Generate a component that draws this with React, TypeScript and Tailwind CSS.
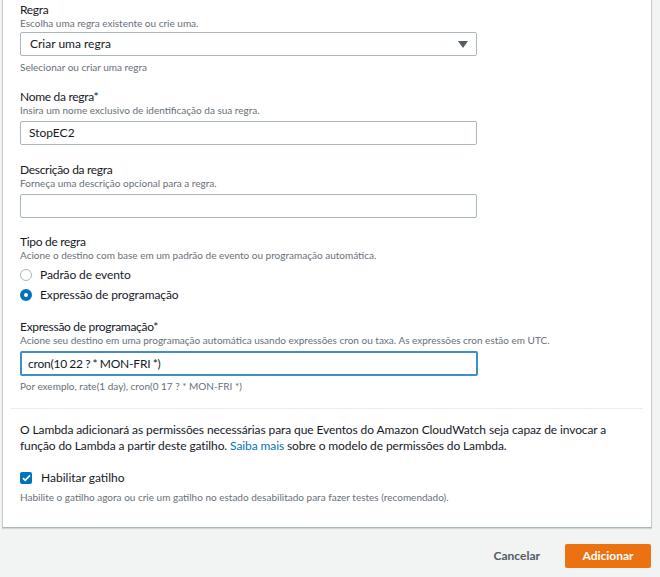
import React from "react";

function Field({
  label,
  hint,
  children,
}: {
  label: string;
  hint: string;
  children?: React.ReactNode;
}) {
  return (
    <div className="flex flex-col">
      <div className="h-[14px] text-[12px] leading-[14px] tracking-[-0.3px] text-[#16191f]">{label}</div>
      <div className="h-[13px] text-[10px] leading-[13px] text-[#687078]">{hint}</div>
      {children}
    </div>
  );
}

function TextBox({ value, focused }: { value?: string; focused?: boolean }) {
  return (
    <div
      className={
        focused
          ? "mt-[4px] flex h-[25px] w-[458px] items-center rounded-[2px] border-2 border-[#3d8fc6] bg-white px-[6px] text-[12px] tracking-[-0.2px] [word-spacing:-0.6px] text-[#16191f]"
          : "mt-[4px] flex h-[24px] w-[457px] items-center rounded-[2px] border border-[#aab7b8] bg-white px-[8px] text-[12px] text-[#16191f]"
      }
    >
      {value}
    </div>
  );
}

function Radio({ label, checked }: { label: string; checked?: boolean }) {
  return (
    <label className="flex h-[20px] items-center gap-[8px] text-[12px] tracking-[-0.1px] text-[#16191f]">
      {checked ? (
        <span className="h-[12px] w-[12px] rounded-full border-[4px] border-[#0073bb] bg-white" />
      ) : (
        <span className="h-[12px] w-[12px] rounded-full border border-[#aab7b8] bg-white" />
      )}
      {label}
    </label>
  );
}

export default function App() {
  return (
    <div
      className="h-[577px] w-[660px] overflow-hidden bg-[#f2f3f3]"
      style={{ fontFamily: "Lato, sans-serif" }}
    >
      <div className="ml-[2px] w-[650px] border-x border-b border-[#c5cbcc] border-b-[#aab7b8] bg-white shadow-[0_1px_1px_rgba(0,0,0,0.12)]">
        <div className="flex flex-col px-[17px] pt-[3px]">
          <Field label="Regra" hint="Escolha uma regra existente ou crie uma.">
            <div className="mt-[2px] flex h-[24px] w-[457px] items-center justify-between rounded-[2px] border border-[#aab7b8] bg-white pl-[9px] pr-[8px] text-[12px] text-[#16191f]">
              <span>Criar uma regra</span>
              <svg width="10" height="7" viewBox="0 0 10 7">
                <path d="M0 0h10L5 7z" fill="#545b64" />
              </svg>
            </div>
            <div className="mt-[5px] h-[13px] text-[10px] leading-[13px] text-[#687078]">
              Selecionar ou criar uma regra
            </div>
          </Field>

          <div className="mt-[16px]">
            <Field label="Nome da regra*" hint="Insira um nome exclusivo de identificação da sua regra.">
              <TextBox value="StopEC2" />
            </Field>
          </div>

          <div className="mt-[18px]">
            <Field label="Descrição da regra" hint="Forneça uma descrição opcional para a regra.">
              <TextBox />
            </Field>
          </div>

          <div className="mt-[17px]">
            <Field
              label="Tipo de regra"
              hint="Acione o destino com base em um padrão de evento ou programação automática."
            >
              <div className="mt-[3px] flex flex-col">
                <Radio label="Padrão de evento" />
                <Radio label="Expressão de programação" checked />
              </div>
            </Field>
          </div>

          <div className="mt-[15px]">
            <Field
              label="Expressão de programação*"
              hint="Acione seu destino em uma programação automática usando expressões cron ou taxa. As expressões cron estão em UTC."
            >
              <TextBox value="cron(10 22 ? * MON-FRI *)" focused />
              <div className="mt-[4px] h-[13px] text-[10px] leading-[13px] text-[#687078]">
                Por exemplo, rate(1 day), cron(0 17 ? * MON-FRI *)
              </div>
            </Field>
          </div>
        </div>

        <div className="mx-[8px] mt-[15px] border-t border-[#eaeded]" />

        <div className="flex flex-col px-[17px] pb-[23px] pt-[13px]">
          <p className="whitespace-nowrap text-[12px] leading-[16px] tracking-[-0.1px] text-[#16191f]">
            O Lambda adicionará as permissões necessárias para que Eventos do Amazon CloudWatch seja capaz de invocar a
            <br />
            função do Lambda a partir deste gatilho. <span className="text-[#0073bb]">Saiba mais</span> sobre o modelo
            de permissões do Lambda.
          </p>

          <label className="mt-[16px] flex h-[16px] items-center gap-[9px] text-[12px] text-[#16191f]">
            <span className="flex h-[12px] w-[12px] items-center justify-center rounded-[2px] bg-[#0073bb]">
              <svg width="9" height="8" viewBox="0 0 9 8">
                <path d="M1 4.2l2.2 2.2L8 1.4" fill="none" stroke="#fff" strokeWidth="1.7" />
              </svg>
            </span>
            Habilitar gatilho
          </label>
          <div className="mt-[5px] h-[13px] text-[10px] leading-[13px] text-[#687078]">
            Habilite o gatilho agora ou crie um gatilho no estado desabilitado para fazer testes (recomendado).
          </div>
        </div>
      </div>

      <div className="mr-[9px] mt-[16px] flex items-center justify-end gap-[25px]">
        <button className="text-[12px] font-bold text-[#545b64]">Cancelar</button>
        <button className="h-[24px] w-[86px] rounded-[2px] bg-[#ec7211] text-[12px] font-bold text-white">
          Adicionar
        </button>
      </div>
    </div>
  );
}
